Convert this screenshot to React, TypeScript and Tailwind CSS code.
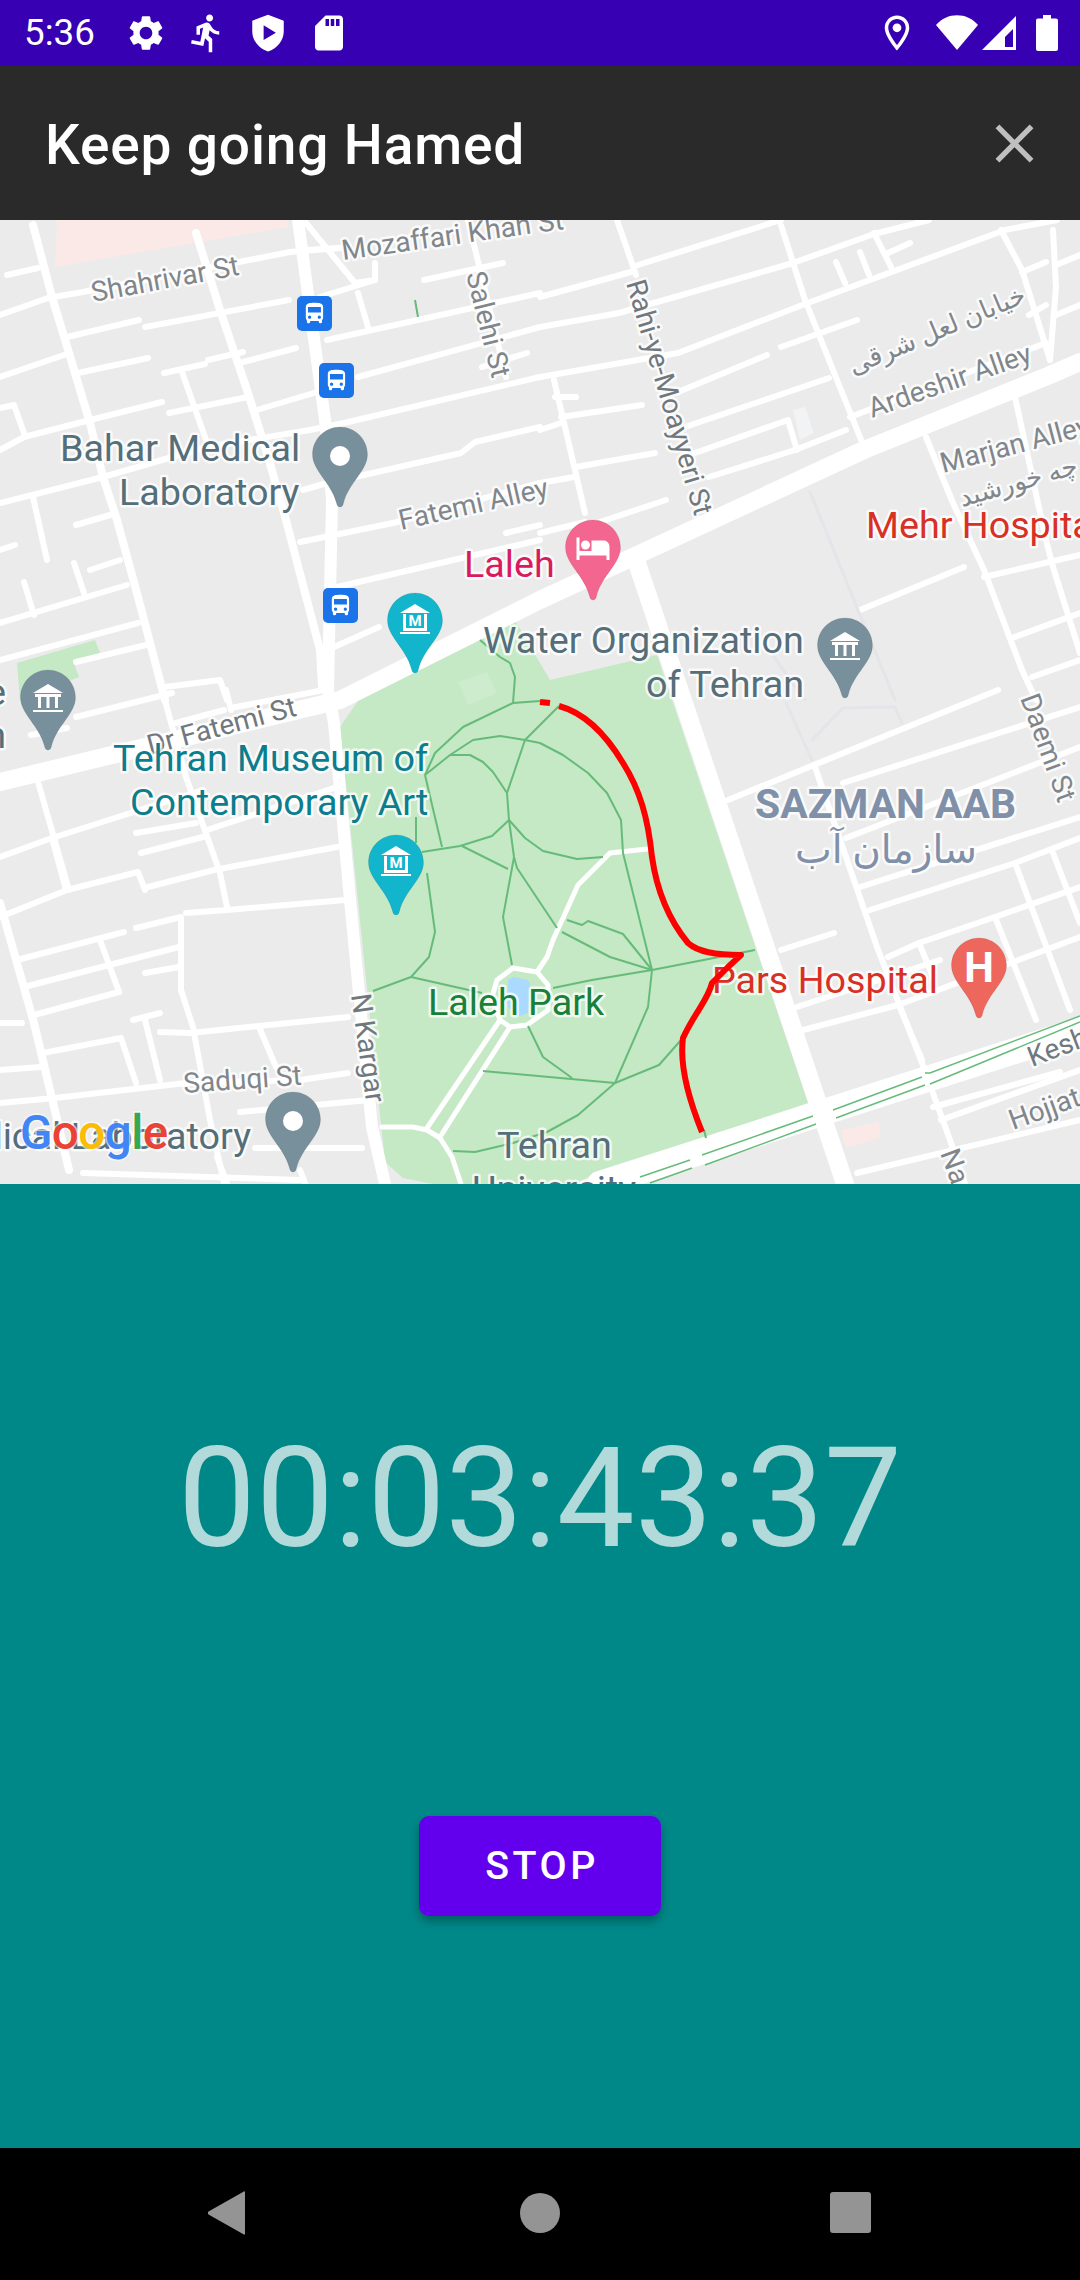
import type { ReactElement, ReactNode } from "react";

// street polylines are in page pixels, the map svg starts at y=220
const MINOR_ROADS = [
  "M0 315L48 298L83 292L234 263L290 252L340 248",
  "M67 337L139 320", "M145 327L289 300", "M0 377L64 355", "M78 373L148 358",
  "M164 373L205 364", "M208 360L243 352", "M243 362L296 348", "M182 372L207 443",
  "M169 413L248 397", "M257 410L317 392", "M0 450L24 437L90 420L162 402",
  "M0 408L14 405L24 433", "M7 275L38 268", "M0 503L103 477L207 447L310 430L344 423L540 377",
  "M0 623L127 585", "M74 563L84 593", "M24 582L34 615", "M0 660L138 623", "M76 662L146 645",
  "M90 570L120 560", "M76 525L110 515", "M33 497L47 560", "M0 550L15 545",
  "M300 542L393 523L540 483", "M337 587L540 540", "M506 533L540 525", "M334 647L379 627",
  "M355 477L461 453L475 442L540 427", "M303 490L327 483", "M358 293L368 327",
  "M306 223L355 283L375 280L375 263", "M320 297L375 280", "M306 250L340 248", "M424 280L503 263",
  "M468 220L506 377", "M527 353L482 367", "M327 340L540 293", "M358 377L540 327",
  "M638 265L781 220", "M540 297L631 272", "M540 327L619 313L793 263L874 234L929 220",
  "M540 377L678 353L805 304L1005 230L1057 220", "M678 392L767 355", "M685 427L829 378",
  "M850 417L1046 343", "M781 225L805 300L833 370L864 447", "M1001 230L1022 270L1050 360",
  "M874 233L891 267", "M836 262L845 283", "M860 252L869 275", "M888 253L910 243", "M781 347L857 320",
  "M1022 272L1046 262", "M1029 315L1046 305", "M1053 230L1056 287L1050 360", "M1056 265L1080 255",
  "M1056 315L1080 305", "M554 380L585 513", "M561 417L642 405", "M540 430L561 423", "M576 467L655 453",
  "M540 483L574 477", "M585 527L666 500", "M540 533L585 522", "M695 453L788 420L797 450",
  "M709 477L795 450L846 430", "M555 397L576 397", "M617 220L636 275", "M926 437L953 503L984 570L1022 670L1036 700",
  "M1015 397L1046 540L1053 567L1080 653", "M984 577L1080 555", "M1012 638L1080 613", "M1032 677L1080 660",
  "M860 610L964 567", "M728 800L998 690", "M843 783L1080 707", "M846 838L1080 747", "M860 887L1080 817",
  "M870 910L1015 863L1080 838", "M1015 863L1070 1010", "M1053 853L1080 923", "M781 950L834 933",
  "M888 957L919 943L995 917L1080 887", "M995 917L1036 1020", "M803 1030L898 1005L1080 937",
  "M898 1003L922 1060", "M919 943L933 977", "M797 1007L940 960", "M933 1107L1060 1072", "M941 1120L1080 1070",
  "M857 1173L1080 1120", "M815 767L877 947L922 1063L950 1140L965 1184",
  "M38 782L69 890", "M0 857L52 838L203 790", "M52 838L66 890", "M0 917L67 890L138 872L145 890",
  "M148 887L214 870L337 847", "M136 833L196 823", "M141 853L203 837", "M207 830L337 787",
  "M186 913L227 910L345 900", "M136 928L181 917", "M17 960L124 932", "M100 940L119 992",
  "M24 987L179 947", "M34 1015L119 992", "M145 973L179 967", "M133 1020L160 1013", "M145 1020L160 1080",
  "M160 1032L190 1033L348 1017", "M259 1027L276 1067", "M43 1053L121 1038L136 1083",
  "M0 1103L55 1098L186 1083L300 1080L348 1073", "M0 1070L41 1067", "M240 1112L369 1100", "M255 1148L362 1148",
  "M83 1173L300 1180", "M217 1157L227 1183", "M300 1170L305 1183", "M226 690L231 710", "M31 735L67 728",
  "M76 717L172 693", "M176 723L224 710", "M231 708L324 690", "M0 1023L22 1023",
  "M165 687L220 680L227 700", "M181 920L181 990L193 1027L210 1120L224 1183", "M162 690L186 777L220 873L227 907",
];
const MID_ROADS = [
  "M33 225L52 297L69 353L90 423L103 477L117 520L138 597L165 700",
  "M196 233L220 310L248 393L269 460L286 520L320 650L322 687",
  "M0 903L34 1023L69 1170",
];
const PARK_PATHS = [
  "M647 849L610 853L578 885L553 940L547 957L537 972",
  "M513 968L537 972L548 985L548 1010L527 1025L510 1027L500 1020L492 997L497 980Z",
  "M500 1020L427 1128", "M510 1027L440 1137", "M382 1127L413 1127L427 1130L440 1138L452 1157L463 1190",
];
const TRAILS = [
  "M480 640L500 657L510 663L515 677L513 703", "M425 775L435 753L463 727L513 703L540 701",
  "M559 706L525 740L507 793L509 820L514 857L517 868L557 928",
  "M425 775L450 755L473 740L500 736L525 740L540 743L563 755L588 773L607 793L621 820L623 853L652 970",
  "M450 755L470 755L483 762L493 772L507 793", "M425 775L442 847", "M416 817L416 843",
  "M422 852L460 846L492 836L509 820L525 838L543 851L577 859L603 857", "M462 846L508 869",
  "M514 857L503 917L512 965", "M427 873L435 932L429 957L411 977L373 991", "M411 977L482 993",
  "M562 932L610 957L652 970", "M567 920L582 925L588 921L623 934L652 970", "M553 988L592 980L652 970L755 950",
  "M652 970L648 1007L615 1083L578 1115L547 1132L513 1143L475 1152L453 1151",
  "M528 1026L543 1057L572 1078", "M483 1071L615 1083L659 1065L681 1040", "M704 1130L706 1138", "M415 300L418 317",
];

function Label({ x, y, size, color, rotate = 0, anchor = "start", weight = 400, children }: {
  x: number; y: number; size: number; color: string; rotate?: number; anchor?: "start" | "end" | "middle"; weight?: number; children: ReactNode;
}): ReactElement {
  return (
    <text x={x} y={y} fontSize={size} fill={color} fontWeight={weight} textAnchor={anchor} transform={rotate ? `rotate(${rotate} ${x} ${y})` : undefined} stroke="#ffffff" strokeOpacity={0.75} strokeWidth={5} strokeLinejoin="round" paintOrder="stroke">
      {children}
    </text>
  );
}

const PIN = "M0 0C15.2 0 27.5 12.3 27.5 27.5 27.5 44 9 55 3.5 76 3 79 1.5 80 0 80 -1.5 80 -3 79 -3.5 76 -9 55 -27.5 44 -27.5 27.5 -27.5 12.3 -15.2 0 0 0Z";

function Pin({ x, y, fill, children }: { x: number; y: number; fill: string; children?: ReactNode }): ReactElement {
  return (
    <g transform={`translate(${x} ${y})`}>
      <path d={PIN} fill={fill} stroke="#000000" strokeOpacity={0.08} />
      {children}
    </g>
  );
}

function BusStop({ x, y }: { x: number; y: number }): ReactElement {
  return (
    <g transform={`translate(${x} ${y})`}>
      <rect width={35} height={35} rx={5} fill="#1a73e8" />
      <path transform="translate(4.5 4.5) scale(1.08)" fill="#ffffff" d="M4 16c0 .88.39 1.67 1 2.22V20c0 .55.45 1 1 1h1c.55 0 1-.45 1-1v-1h8v1c0 .55.45 1 1 1h1c.55 0 1-.45 1-1v-1.78c.61-.55 1-1.34 1-2.22V6c0-3.5-3.58-4-8-4s-8 .5-8 4v10zm3.5 1c-.83 0-1.5-.67-1.5-1.5S6.67 14 7.5 14s1.5.67 1.5 1.5S8.33 17 7.5 17zm9 0c-.83 0-1.5-.67-1.5-1.5s.67-1.5 1.5-1.5 1.5.67 1.5 1.5-.67 1.5-1.5 1.5zm1.5-6H6V6h12v5z" />
    </g>
  );
}

function Museum(): ReactElement {
  return (
    <g fill="#ffffff">
      <path d="M0 11L15 20H-15Z" />
      <path d="M-12 21H-9V38H-12ZM9 21H12V38H9ZM-9 35H9V38H-9Z" />
      <rect x={-15} y={39} width={30} height={2} />
      <text x={0} y={33} fontSize={15} fontWeight={700} textAnchor="middle">M</text>
    </g>
  );
}

function Bank(): ReactElement {
  return (
    <g fill="#ffffff">
      <path d="M0 14L15 23H-15Z" />
      <path d="M-13 24H13V27H10V38H7V27H1.5V38H-1.5V27H-7V38H-10V27H-13Z" />
      <rect x={-15} y={40} width={30} height={2} />
    </g>
  );
}

function MapView(): ReactElement {
  return (
    <svg viewBox="0 220 1080 964" className="block h-[964px] w-[1080px] font-['Roboto','DejaVu_Sans',sans-serif]">
      <rect x={0} y={220} width={1080} height={964} fill="#ebebeb" />
      <path d="M57 220L55 267L172 247L288 227V220Z" fill="#fbe9e7" />
      <path d="M841 1130L879 1122L880 1138L846 1148Z" fill="#fbe9e7" />
      <path d="M17 663L95 640L100 653L74 663L79 677L20 700Z" fill="#c5e8c5" />
      <path d="M793 410L805 407L814 433L800 440Z" fill="#f1f3f4" />
      <path d="M340 727L362 695L516 622L550 680L657 655L808 1103L600 1172L560 1190H463L403 1178L385 1162Z" fill="#c5e8c5" />
      <path d="M458 682L487 672L497 693L468 705Z" fill="#cdeccd" />
      <path d="M508 980L513 977L527 980L530 983L528 1013L517 1017L508 1007Z" fill="#aadaff" />

      <g fill="none" stroke="#ffffff" strokeLinecap="round" strokeLinejoin="round">
        <g strokeWidth={6}>{MINOR_ROADS.map((d) => <path key={d} d={d} />)}</g>
        <g strokeWidth={8}>{MID_ROADS.map((d) => <path key={d} d={d} />)}</g>
        <path d="M810 492L858 610L895 700M786 703L812 760M812 740L843 708L895 707L902 723M774 657L805 700" stroke="#e3e5e8" strokeWidth={3} />
        <path d="M298 220L325 420L332 500L328 690L334 723L350 900L372 1127L385 1184" strokeWidth={12} />
        <path d="M0 782L340 700L540 600L864 450L1050 375L1080 362" strokeWidth={18} />
        <path d="M636 560L845 1184" strokeWidth={18} />
        <path d="M600 1184L1080 1030" strokeWidth={26} />
        <g strokeWidth={5}>{PARK_PATHS.map((d) => <path key={d} d={d} />)}</g>
      </g>
      <path d="M1080 1016L930 1073L925 1073M1080 1022L930 1084M922 1077L833 1110M925 1085L836 1118M813 1116L702 1155M816 1124L705 1165M690 1160L640 1177M692 1168L650 1183" fill="none" stroke="#66bb7a" strokeWidth={1.5} />
      <g fill="none" stroke="#66bb7a" strokeWidth={2} strokeLinejoin="round">
        {TRAILS.map((d) => <path key={d} d={d} />)}
      </g>

      <Label x={93} y={302} size={28} color="#80868b" rotate={-10.5}>Shahrivar St</Label>
      <Label x={343} y={260} size={28} color="#80868b" rotate={-8}>Mozaffari Khah St</Label>
      <Label x={466} y={274} size={28} color="#80868b" rotate={76}>Salehi St</Label>
      <Label x={626} y={283} size={28} color="#70787e" rotate={73.6}>Rahi-ye-Moayyeri St</Label>
      <Label x={401} y={530} size={28} color="#80868b" rotate={-12.7}>Fatemi Alley</Label>
      <Label x={872} y={418} size={28} color="#80868b" rotate={-19.3}>Ardeshir Alley</Label>
      <Label x={853} y={375} size={26} color="#80868b" rotate={-22.8}>خیابان لعل شرقی</Label>
      <Label x={943} y={473} size={28} color="#80868b" rotate={-14.7}>Marjan Alley</Label>
      <Label x={962} y={507} size={26} color="#80868b" rotate={-16}>چه خورشید</Label>
      <Label x={150} y={755} size={28} color="#70787e" rotate={-15}>Dr Fatemi St</Label>
      <Label x={1020} y={698} size={28} color="#80868b" rotate={70}>Daemi St</Label>
      <Label x={1032} y={1067} size={28} color="#70787e" rotate={-21}>Kesh</Label>
      <Label x={1013} y={1130} size={28} color="#80868b" rotate={-20}>Hojjat</Label>
      <Label x={940} y={1153} size={28} color="#80868b" rotate={70}>Na</Label>
      <Label x={351} y={995} size={28} color="#70787e" rotate={82}>N Kargar</Label>
      <Label x={184} y={1093} size={28} color="#80868b" rotate={-4}>Saduqi St</Label>

      <Label x={60} y={461} size={37.7} color="#546e7a">Bahar Medical</Label>
      <Label x={119} y={505} size={37.7} color="#546e7a">Laboratory</Label>
      <Label x={464} y={577} size={37.7} color="#d81b60">Laleh</Label>
      <Label x={483} y={653} size={37.7} color="#546e7a">Water Organization</Label>
      <Label x={646} y={697} size={37.7} color="#546e7a">of Tehran</Label>
      <Label x={866} y={538} size={37.7} color="#d93025">Mehr Hospital</Label>
      <Label x={113} y={771} size={37.7} color="#0b7d8c">Tehran Museum of</Label>
      <Label x={130} y={815} size={37.7} color="#0b7d8c">Contemporary Art</Label>
      <Label x={428} y={1015} size={37.7} color="#188038">Laleh Park</Label>
      <Label x={497} y={1158} size={37.7} color="#546e7a">Tehran</Label>
      <Label x={472} y={1202} size={37.7} color="#546e7a">University</Label>
      <Label x={755} y={818} size={40.9} color="#7f90a8" weight={700}>SAZMAN AAB</Label>
      <Label x={886} y={863} size={39} color="#7f90a8" anchor="middle">سازمان آب</Label>
      <Label x={712} y={993} size={37.7} color="#d93025">Pars Hospital</Label>
      <Label x={251} y={1149} size={37.7} color="#546e7a" anchor="end">dical Laboratory</Label>
      <Label x={6} y={705} size={37.7} color="#546e7a" anchor="end">e</Label>
      <Label x={6} y={748} size={37.7} color="#546e7a" anchor="end">n</Label>

      <path d="M540 702L550 703M559 706C585 713 605 733 623 763C640 790 648 818 652 857C656 885 665 915 688 943C698 952 715 955 741 955L728 967L712 983C708 1000 695 1012 683 1038C680 1060 685 1090 702 1132" fill="none" stroke="#ff0000" strokeWidth={6} strokeLinejoin="round" />

      <BusStop x={297} y={296} />
      <BusStop x={319} y={363} />
      <BusStop x={323} y={588} />

      <Pin x={340} y={427} fill="#78909c"><circle cx={0} cy={29} r={10} fill="#ffffff" /></Pin>
      <Pin x={293} y={1092} fill="#78909c"><circle cx={0} cy={29} r={10} fill="#ffffff" /></Pin>
      <Pin x={415} y={593} fill="#12b5cb"><Museum /></Pin>
      <Pin x={396} y={835} fill="#12b5cb"><Museum /></Pin>
      <Pin x={845} y={618} fill="#78909c"><Bank /></Pin>
      <Pin x={48} y={670} fill="#78909c"><Bank /></Pin>
      <Pin x={593} y={520} fill="#f3668f">
        <path transform="translate(-18 10) scale(1.5)" fill="#ffffff" d="M7 13c1.66 0 3-1.34 3-3S8.66 7 7 7s-3 1.34-3 3 1.34 3 3 3zm12-6h-8v7H3V5H1v15h2v-3h18v3h2v-9c0-2.21-1.79-4-4-4z" />
      </Pin>
      <Pin x={979} y={938} fill="#ee675c">
        <text x={0} y={44} fontSize={42} fontWeight={700} fill="#ffffff" textAnchor="middle">H</text>
      </Pin>

      <text x={20} y={1149} fontSize={47.5} fontWeight={500} stroke="#ffffff" strokeOpacity={0.6} strokeWidth={3} paintOrder="stroke" letterSpacing={-0.5}>
        <tspan fill="#4285f4">G</tspan>
        <tspan fill="#ea4335">o</tspan>
        <tspan fill="#fbbc05">o</tspan>
        <tspan fill="#4285f4">g</tspan>
        <tspan fill="#34a853">l</tspan>
        <tspan fill="#ea4335">e</tspan>
      </text>
    </svg>
  );
}

function StatusBar(): ReactElement {
  return (
    <div className="flex h-[66px] items-center bg-[#3700b3] pl-[24px] pr-[22px] text-white">
      <span className="mr-[30px] w-[71px] text-[36.75px] leading-none">5:36</span>
      <div className="flex gap-[19px]">
        <svg viewBox="0 0 24 24" className="h-[42px] w-[42px] fill-white"><path d="M19.14 12.94c.04-.3.06-.61.06-.94 0-.32-.02-.64-.07-.94l2.03-1.58c.18-.14.23-.41.12-.61l-1.92-3.32c-.12-.22-.37-.29-.59-.22l-2.39.96c-.5-.38-1.03-.7-1.62-.94l-.36-2.54c-.04-.24-.24-.41-.48-.41h-3.84c-.24 0-.43.17-.47.41l-.36 2.54c-.59.24-1.13.57-1.62.94l-2.39-.96c-.22-.08-.47 0-.59.22L2.74 8.87c-.12.21-.08.47.12.61l2.03 1.58c-.05.3-.09.63-.09.94s.02.64.07.94l-2.03 1.58c-.18.14-.23.41-.12.61l1.92 3.32c.12.22.37.29.59.22l2.39-.96c.5.38 1.03.7 1.62.94l.36 2.54c.05.24.24.41.48.41h3.84c.24 0 .44-.17.47-.41l.36-2.54c.59-.24 1.13-.56 1.62-.94l2.39.96c.22.08.47 0 .59-.22l1.92-3.32c.12-.22.07-.47-.12-.61l-2.01-1.58zM12 15.6c-1.98 0-3.6-1.62-3.6-3.6s1.62-3.6 3.6-3.6 3.6 1.62 3.6 3.6-1.62 3.6-3.6 3.6z" /></svg>
        <svg viewBox="0 0 24 24" className="h-[42px] w-[42px] fill-white"><path d="M13.49 5.48c1.1 0 2-.9 2-2s-.9-2-2-2-2 .9-2 2 .9 2 2 2zm-3.6 13.9l1-4.4 2.1 2v6h2v-7.5l-2.1-2 .6-3c1.3 1.5 3.3 2.5 5.5 2.5v-2c-1.9 0-3.5-1-4.3-2.4l-1-1.6c-.4-.6-1-1-1.7-1-.3 0-.5.1-.8.1l-5.2 2.2v4.7h2v-3.4l1.8-.7-1.6 8.1-4.9-1-.4 2 7 1.4z" /></svg>
        <svg viewBox="0 0 24 24" className="h-[42px] w-[42px] fill-white"><path fillRule="evenodd" d="M12 1.5L3 5v6.1c0 5 3.8 10 9 11.4 5.2-1.4 9-6.4 9-11.4V5zM9.5 7.5v8.5l7-4.2z" /></svg>
        <svg viewBox="0 0 24 24" className="h-[42px] w-[42px] fill-white"><path d="M18 2h-8L4.02 8 4 20c0 1.1.9 2 2 2h12c1.1 0 2-.9 2-2V4c0-1.1-.9-2-2-2zm-6 6h-2V4h2v4zm3 0h-2V4h2v4zm3 0h-2V4h2v4z" /></svg>
      </div>
      <div className="ml-auto flex items-center">
        <svg viewBox="0 0 24 24" className="h-[42px] w-[42px] fill-white"><path d="M12 2C8.13 2 5 5.13 5 9c0 5.25 7 13 7 13s7-7.75 7-13c0-3.87-3.13-7-7-7zM7 9c0-2.76 2.24-5 5-5s5 2.24 5 5c0 2.88-2.88 7.19-5 9.88C9.92 16.21 7 11.85 7 9z" /><circle cx="12" cy="9" r="2.5" /></svg>
        <svg viewBox="0 0 42 36" className="ml-[18px] h-[36px] w-[42px] fill-white"><path d="M0 10C11 -3 31 -3 42 10L21 35Z" /></svg>
        <svg viewBox="0 0 34 34" className="ml-[4px] h-[34px] w-[34px] fill-white"><path fillRule="evenodd" d="M34 0V34H0ZM31 13L23 21V31H31Z" /></svg>
        <svg viewBox="0 0 22 36" className="ml-[20px] h-[36px] w-[22px] fill-white"><path d="M7 0H15V3.5H20Q22 3.5 22 5.5V34Q22 36 20 36H2Q0 36 0 34V5.5Q0 3.5 2 3.5H7Z" /></svg>
      </div>
    </div>
  );
}

function NavBar(): ReactElement {
  return (
    <div className="flex h-[132px] items-center justify-center gap-[269px] bg-black pb-[2px]">
      <svg viewBox="0 0 42 44" className="h-[44px] w-[42px] fill-[#949494]"><path d="M37 1.5V42.5Q37 44.5 35 43L0.5 23.5Q-1 22 0.5 20.5L35 1Q37 -0.5 37 1.5Z" /></svg>
      <svg viewBox="0 0 42 42" className="h-[42px] w-[42px] fill-[#949494]"><circle cx="21" cy="21" r="20" /></svg>
      <svg viewBox="0 0 42 42" className="h-[42px] w-[42px] fill-[#949494]"><rect x="0" y="0" width="41" height="41" rx="3" /></svg>
    </div>
  );
}

export default function App(): ReactElement {
  return (
    <div className="flex h-[2280px] w-[1080px] flex-col overflow-hidden font-['Roboto',sans-serif]">
      <StatusBar />
      <header className="flex h-[154px] items-center justify-between bg-[#2a2a2a] pl-[45px] pr-[33px]">
        <h1 className="mt-[5px] text-[55px] font-medium leading-none tracking-[0.85px] text-white">Keep going Hamed</h1>
        <svg viewBox="0 0 24 24" className="h-[65px] w-[65px] fill-white/70"><path d="M19 6.41L17.59 5 12 10.59 6.41 5 5 6.41 10.59 12 5 17.59 6.41 19 12 13.41 17.59 19 19 17.59 13.41 12z" /></svg>
      </header>
      <MapView />
      <main className="flex flex-1 flex-col items-center bg-[#008888] pt-[247px]">
        <p className="text-[138.6px] leading-[136px] text-[#b2dada]">00:03:43:37</p>
        <button className="mt-[249px] h-[100px] w-[242px] rounded-[10px] bg-[#6200ee] pl-[4px] text-[39.4px] font-medium tracking-[3.5px] text-white shadow-[0_5px_10px_rgba(0,0,0,0.3)]">STOP</button>
      </main>
      <NavBar />
    </div>
  );
}
